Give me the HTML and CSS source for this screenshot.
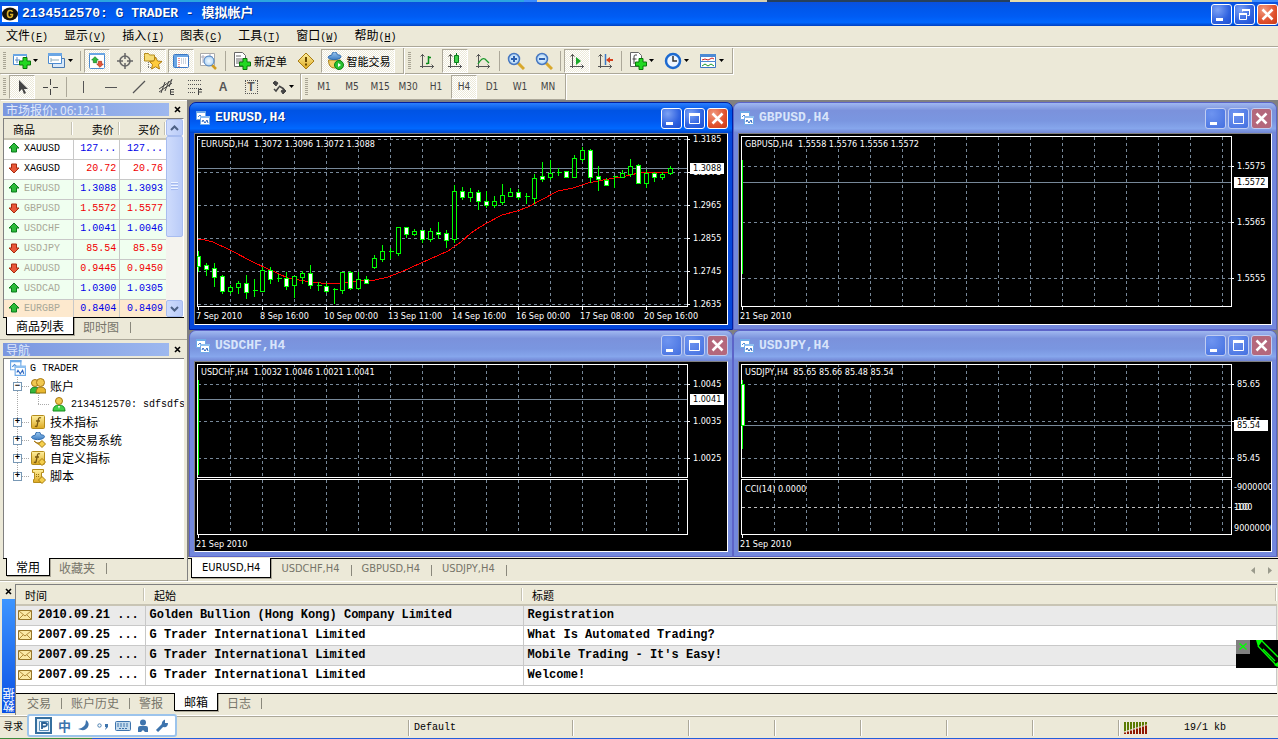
FILE: index.html
```html
<!DOCTYPE html>
<html lang="zh-CN">
<head>
<meta charset="utf-8">
<title>2134512570: G TRADER - 模拟帐户</title>
<link rel="stylesheet" href="styles.css">
</head>
<body>
<svg class="defs" aria-hidden="true">
  <defs>
    <linearGradient id="gold" x1="0" y1="0" x2="0" y2="1"><stop offset="0" stop-color="#fff0a0"/><stop offset="1" stop-color="#dca820"/></linearGradient>
    <linearGradient id="sky" x1="0" y1="0" x2="0" y2="1"><stop offset="0" stop-color="#9cc8f0"/><stop offset="1" stop-color="#3f7fc4"/></linearGradient>
    <radialGradient id="lens"><stop offset="0" stop-color="#f4fbff"/><stop offset="1" stop-color="#a8d0f4"/></radialGradient>
    <symbol id="plus" viewBox="0 0 12 12"><path d="M4 .5h4v3.500h3.500v4H8v3.500H4V8H.5V4H4z" fill="#22d822" stroke="#087808"/></symbol>
    <symbol id="caret" viewBox="0 0 5 3"><path d="M0 0h5L2.500 3z" fill="#000"/></symbol>
    <symbol id="up" viewBox="0 0 12 12"><path d="M6 1l5 5H8.500v4h-5V6H1z" fill="#2dbb3a" stroke="#0b7a1c"/></symbol>
    <symbol id="down" viewBox="0 0 12 12"><path d="M6 11l5-5H8.500V2h-5v4H1z" fill="#e8583a" stroke="#a82c10"/></symbol>
    <symbol id="charts" viewBox="0 0 14 14"><path d="M.5.5h9v8h-9z" fill="#fff" stroke="#6faae8"/><path d="M0 0h10v2H0z" fill="#6faae8"/><path d="M2 6l2-2 2 2" fill="none" stroke="#4c8ad4"/><path d="M4.500 5.500h9v8h-9z" fill="#fff" stroke="#6faae8"/><path d="M4 5h10v2H4z" fill="#8fc0f0"/><path d="M6 11l1-2 2 3 2-3 1 3" fill="none" stroke="#2c66c0"/></symbol>
    <symbol id="hat" viewBox="0 0 16 14"><path d="M1 7q0-2 4-2.500Q5 1 8 1t3 3q4 0 4 2 0 2-4 3-8 1-10-2z" fill="url(#sky)" stroke="#2b68ac"/></symbol>
    <symbol id="rhomb" viewBox="0 0 8 8"><path d="M4 .5L7.500 4 4 7.500.5 4z" fill="#f5cf4c" stroke="#a67c10"/></symbol>
    <symbol id="mail" viewBox="0 0 14 11"><path d="M.5.500h13v9H.5z" fill="#fbe9a6" stroke="#96762a"/><path d="M1 1l6 5 6-5M1 9l4-4M13 9L9 5" fill="none" stroke="#b08a3a"/></symbol>
    <symbol id="axes" viewBox="0 0 16 16"><path d="M3.500 1v14M1 13.500h14M1.500 3.500l2-2 2 2M12.500 11.500l2 2-2 2" fill="none" stroke="#555"/></symbol>
    <symbol id="min" viewBox="0 0 19 19"><path d="M4 13h7v3H4z" fill="#fff"/></symbol>
    <symbol id="max" viewBox="0 0 19 19"><path d="M4.500 4.500h10v10h-10z" fill="none" stroke="#fff"/><path d="M4 4h11v3H4z" fill="#fff"/></symbol>
    <symbol id="rest" viewBox="0 0 19 19"><path d="M7.500 6.500v-2h7v6h-2" fill="none" stroke="#fff"/><path d="M7 4h8v2H7z" fill="#fff"/><path d="M4.500 8.500h7v6h-7z" fill="none" stroke="#fff"/><path d="M4 8h8v2H4z" fill="#fff"/></symbol>
    <symbol id="cross" viewBox="0 0 19 19"><path d="M4.500 4.500l10 10m0-10l-10 10" stroke="#fff" stroke-width="2.500"/></symbol>
    <symbol id="x" viewBox="0 0 7 7"><path d="M1 1l5 5m0-5L1 6" stroke="#000" stroke-width="1.600"/></symbol>
  </defs>
</svg>

<div class="behind"></div>
<header class="title">
  <svg class="logo" viewBox="0 0 16 16"><path d="M0 0h16v16H0z" fill="#fff"/><ellipse cx="8" cy="8" rx="8" ry="6.500" fill="#161208"/><path d="M10.500 6Q10 4.500 8 4.500 5.500 4.500 5.500 8T8 11.500q2.500 0 2.500-3H8" fill="none" stroke="#d9b02c" stroke-width="1.600"/></svg>
  <h1>2134512570: G TRADER - <span>模拟帐户</span></h1>
  <div class="winbtns">
    <button aria-label="最小化"><svg><use href="#min"/></svg></button><button aria-label="还原"><svg><use href="#rest"/></svg></button><button class="close" aria-label="关闭"><svg><use href="#cross"/></svg></button>
  </div>
</header>

<nav class="menu">
  <button>文件<span>(<u>F</u>)</span></button><button>显示<span>(<u>V</u>)</span></button><button>插入<span>(<u>I</u>)</span></button><button>图表<span>(<u>C</u>)</span></button><button>工具<span>(<u>T</u>)</span></button><button>窗口<span>(<u>W</u>)</span></button><button>帮助<span>(<u>H</u>)</span></button>
</nav>

<div class="toolrow">
  <div class="toolbar main">
    <i class="grip"></i>
    <button class="drop" aria-label="新图表"><svg class="ic" viewBox="0 0 18 18"><path d="M.5 2.500h13v10H.5z" fill="#fff" stroke="#4a8ad0"/><path d="M0 2h14v2H0z" fill="#6aa6e4"/><path d="M4 5v6M2 8h5" stroke="#5c8cc4"/><use href="#plus" x="6" y="5" width="12" height="12"/></svg><svg class="caret"><use href="#caret"/></svg></button>
    <button class="drop" aria-label="模板"><svg class="ic" viewBox="0 0 18 18"><path d="M4.500 6.500h12v9h-12z" fill="#d8e8f8" stroke="#4a7ab0"/><path d="M.5 1.500h13v10H.5z" fill="#fff" stroke="#4a8ad0"/><path d="M0 1h14v3H0z" fill="#6aa6e4"/><path d="M3 8h8M3 6v4" stroke="#8ab"/></svg><svg class="caret"><use href="#caret"/></svg></button>
    <i class="sep"></i>
    <button class="on" aria-label="市场报价"><svg class="ic" viewBox="0 0 18 18"><rect x="1.500" y="1.500" width="15" height="15" rx="1" fill="#fff" stroke="#4a8ad0"/><path d="M1 1h16v2H1z" fill="#6aa6e4"/><use href="#up" x="3" y="4" width="8" height="8"/><use href="#down" x="8" y="8" width="8" height="8"/></svg></button>
    <button aria-label="数据窗口"><svg class="ic" viewBox="0 0 18 18"><circle cx="9" cy="9" r="5" fill="none" stroke="#666" stroke-width="1.600"/><path d="M9 1v6M9 11v6M1 9h6M11 9h6" stroke="#666" stroke-width="1.500"/></svg></button>
    <button class="on" aria-label="导航"><svg class="ic" viewBox="0 0 18 18"><path d="M.5 3.500v-2h4l1 1.500h5v6H.5z" fill="#f7dc74" stroke="#b48c1c"/><path d="M4.500 10v6M4 15.500h3" stroke="#777" stroke-dasharray="1 1"/><path d="M11.500 5l2 4 4.500.5-3.500 3 1 4.500-4-2.200-4 2.200 1-4.500-3-3 4.300-.5z" fill="#ffcb3c" stroke="#b07d10"/></svg></button>
    <button class="on" aria-label="终端"><svg class="ic" viewBox="0 0 18 18"><rect x="1.500" y="2.500" width="15" height="13" rx="1" fill="#fff" stroke="#3a78c4"/><path d="M2 3h14v2H2zM2 5h3v10H2z" fill="#6aa6e4"/><path d="M7 6v9" stroke="#d33" stroke-dasharray="1 1"/><path d="M9 7h6M9 9h6M9 11h6" stroke="#9ab" stroke-dasharray="1 1"/></svg></button>
    <button aria-label="策略测试"><svg class="ic" viewBox="0 0 18 18"><path d="M.5 1.500h14v12H.5z" fill="#fff" stroke="#aaa"/><path d="M3 3v8M1 5h12M10 2v3" stroke="#aab"/><path d="M12 13l4 4" stroke="#d09c20" stroke-width="2.500"/><circle cx="9" cy="9" r="5" fill="url(#lens)" fill-opacity=".9" stroke="#4a80c0"/></svg></button>
    <i class="sep"></i>
    <button class="wide" type="button"><svg class="ic" viewBox="0 0 18 18"><path d="M1.500.5h8l3 3v11h-11z" fill="#fff" stroke="#666"/><path d="M3 4h5M3 7h7M3 9h7M3 11h4" stroke="#666"/><use href="#plus" x="6" y="6" width="12" height="12"/></svg>新定单</button>
    <button aria-label="警告"><svg class="ic" viewBox="0 0 18 18"><path d="M9 1l8 8-8 8-8-8z" fill="url(#gold)" stroke="#a87c14"/><path d="M9 5v5M9 11.500v2" stroke="#6b4a00" stroke-width="2"/></svg></button>
    <button class="on wide auto"><svg class="ic" viewBox="0 0 18 18"><path d="M2.500 8h12q0 8-6 8t-6-8z" fill="#f2cf66" stroke="#a8821c"/><use href="#hat" x="0" y="-1" width="17" height="13"/><circle cx="13" cy="13" r="4.500" fill="#28c030" stroke="#0d8014"/><path d="M12 11v4l3-2z" fill="#fff"/></svg>智能交易</button>
  </div>
  <div class="toolbar">
    <i class="grip"></i>
    <button aria-label="柱状图"><svg class="ic s" viewBox="0 0 16 16"><use href="#axes"/><path d="M9.500 3v8M7 10.500h2M10 4.500h2" stroke="#0a8a1a" stroke-width="1.500"/></svg></button>
    <button class="on" aria-label="阴阳烛"><svg class="ic s" viewBox="0 0 16 16"><use href="#axes"/><path d="M9.500 0v12" stroke="#0a7a1a"/><path d="M7.500 2.500h4v7h-4z" fill="#3fd04a" stroke="#0a7a1a"/></svg></button>
    <button aria-label="折线图"><svg class="ic s" viewBox="0 0 16 16"><use href="#axes"/><path d="M3 11q4-7 7-5l4 4" fill="none" stroke="#1a9a2a" stroke-width="1.300"/></svg></button>
    <i class="sep"></i>
    <button aria-label="放大"><svg class="ic" viewBox="0 0 18 18"><path d="M11 11l6 6" stroke="#d8a82c" stroke-width="3"/><circle cx="7" cy="7" r="5.500" fill="url(#lens)" stroke="#4878c0" stroke-width="1.500"/><path d="M4 7h6M7 4v6" stroke="#2c60b0" stroke-width="2"/></svg></button>
    <button aria-label="缩小"><svg class="ic" viewBox="0 0 18 18"><path d="M11 11l6 6" stroke="#d8a82c" stroke-width="3"/><circle cx="7" cy="7" r="5.500" fill="url(#lens)" stroke="#4878c0" stroke-width="1.500"/><path d="M4 7h6" stroke="#2c60b0" stroke-width="2"/></svg></button>
    <i class="sep"></i>
    <button class="on" aria-label="自动滚动"><svg class="ic s" viewBox="0 0 16 16"><use href="#axes"/><path d="M7 4v8l5-4z" fill="#18a828"/></svg></button>
    <button aria-label="图表平移"><svg class="ic s" viewBox="0 0 16 16"><use href="#axes"/><path d="M8.500 1v11" stroke="#3a78c4" stroke-width="1.500"/><path d="M9 7l4-3v2h3v2h-3v2z" fill="#d8401c"/></svg></button>
    <i class="sep"></i>
    <button class="drop" aria-label="指标"><svg class="ic" viewBox="0 0 18 18"><path d="M1.500.5h8l3 3v11h-11z" fill="#fff" stroke="#666"/><path d="M8 3H6q-1 0-1 2v7M3.500 7h4" fill="none" stroke="#444"/><use href="#plus" x="6" y="6" width="12" height="12"/></svg><svg class="caret"><use href="#caret"/></svg></button>
    <button class="drop" aria-label="时间周期"><svg class="ic" viewBox="0 0 18 18"><circle cx="9" cy="9" r="7" fill="#eef6ff" stroke="#1d6ad0" stroke-width="2.500"/><path d="M9 4v5h4" fill="none" stroke="#333" stroke-width="1.500"/></svg><svg class="caret"><use href="#caret"/></svg></button>
    <button class="drop" aria-label="图表模板"><svg class="ic" viewBox="0 0 18 18"><path d="M1.500 2.500h15v13h-15z" fill="#fff" stroke="#3a78c4"/><path d="M1 2h16v3H1zM1 9h16v1H1z" fill="#4c8ad4"/><path d="M3 8l3-1 3 1 4-2 2 1" fill="none" stroke="#c22"/><path d="M3 14l3-2 3 2 3-2 3 2" fill="none" stroke="#1a9a2a"/></svg><svg class="caret"><use href="#caret"/></svg></button>
  </div>
</div>

<div class="toolrow">
  <div class="toolbar draw">
    <i class="grip"></i>
    <button class="on" aria-label="光标"><svg class="ic s" viewBox="0 0 16 16"><path d="M5 1v12l3-3 2 5 2-1-2-4h4z" fill="#444"/></svg></button>
    <button aria-label="十字线"><svg class="ic s" viewBox="0 0 16 16"><path d="M8.500 0v6M8.500 10v6M1 8.500h5M11 8.500h5" stroke="#444"/></svg></button>
    <i class="sep"></i>
    <button aria-label="垂直线"><svg class="ic s" viewBox="0 0 16 16"><path d="M8.500 2v12" stroke="#555"/></svg></button>
    <button aria-label="水平线"><svg class="ic s" viewBox="0 0 16 16"><path d="M2 8.500h12" stroke="#555"/></svg></button>
    <button aria-label="趋势线"><svg class="ic s" viewBox="0 0 16 16"><path d="M2 14L14 2" stroke="#555" stroke-width="1.300"/></svg></button>
    <button aria-label="等距通道"><svg class="ic s" viewBox="0 0 16 16"><path d="M0 10L13 1M0 13L13 4M2 14L6 3M6 12l4-10M10 8l3-8" stroke="#444"/><path d="M15 10.500h-3.500v5H15M12 13h3" fill="none" stroke="#444"/></svg></button>
    <button aria-label="斐波那契"><svg class="ic s" viewBox="0 0 16 16"><path d="M1 1.500h14M1 5.500h14M1 9.500h14M1 13.500h8" stroke="#555" stroke-dasharray="1 1"/><path d="M11.500 16v-5.500H15M12 13h3" fill="none" stroke="#444"/></svg></button>
    <button class="glyph">A</button>
    <button class="glyph"><span class="boxed">T</span></button>
    <button class="drop" aria-label="箭头"><svg class="ic s" viewBox="0 0 16 16"><path d="M2 4l2-2 3 2-2 3zM10 12l3-2 2 2-3 3z" fill="#444" stroke="#444"/><path d="M3 10l2 2 3-4M8 7l5 3" fill="none" stroke="#444" stroke-width="1.500"/></svg><svg class="caret"><use href="#caret"/></svg></button>
  </div>
  <div class="toolbar periods">
    <i class="grip"></i>
    <button>M1</button><button>M5</button><button>M15</button><button>M30</button><button>H1</button><button class="on">H4</button><button>D1</button><button>W1</button><button>MN</button>
  </div>
</div>

<main class="work">
  <aside class="side">
    <section class="panel quotes">
      <div class="cap"><h2>市场报价: 06:12:11</h2><button aria-label="关闭"><svg><use href="#x"/></svg></button></div>
      <div class="sheet">
        <table>
          <thead><tr><th class="l">商品</th><th>卖价</th><th>买价</th></tr></thead>
          <tbody>
            <tr class="hot"><td><svg><use href="#up"/></svg>XAUUSD</td><td class="b">127...</td><td class="b">127...</td></tr>
            <tr class="hot"><td><svg><use href="#down"/></svg>XAGUSD</td><td class="r">20.72</td><td class="r">20.76</td></tr>
            <tr><td><svg><use href="#up"/></svg>EURUSD</td><td class="b">1.3088</td><td class="b">1.3093</td></tr>
            <tr><td><svg><use href="#down"/></svg>GBPUSD</td><td class="r">1.5572</td><td class="r">1.5577</td></tr>
            <tr><td><svg><use href="#up"/></svg>USDCHF</td><td class="b">1.0041</td><td class="b">1.0046</td></tr>
            <tr><td><svg><use href="#down"/></svg>USDJPY</td><td class="r">85.54</td><td class="r">85.59</td></tr>
            <tr><td><svg><use href="#down"/></svg>AUDUSD</td><td class="r">0.9445</td><td class="r">0.9450</td></tr>
            <tr><td><svg><use href="#up"/></svg>USDCAD</td><td class="b">1.0300</td><td class="b">1.0305</td></tr>
            <tr class="sel"><td><svg><use href="#up"/></svg>EURGBP</td><td class="b">0.8404</td><td class="b">0.8409</td></tr>
          </tbody>
        </table>
        <div class="scroll">
          <button aria-label="向上"><svg viewBox="0 0 9 6"><path d="M1 5l3.500-3.500L8 5" fill="none" stroke="#4d6185" stroke-width="2"/></svg></button>
          <div class="thumb"></div>
          <button aria-label="向下"><svg viewBox="0 0 9 6"><path d="M1 1l3.500 3.500L8 1" fill="none" stroke="#4d6185" stroke-width="2"/></svg></button>
        </div>
      </div>
      <div class="tabs"><button class="on">商品列表</button><button>即时图</button></div>
    </section>
    <section class="panel navi">
      <div class="cap"><h2>导航</h2><button aria-label="关闭"><svg><use href="#x"/></svg></button></div>
      <ul class="tree">
        <li class="root"><svg class="ti"><use href="#charts"/></svg><span class="lat">G TRADER</span></li>
        <li><button class="box">−</button><svg class="ti" viewBox="0 0 16 16"><path d="M0 15q0-6 5-6t5 6z" fill="#35b83c" stroke="#167a1c"/><circle cx="5" cy="5" r="3.500" fill="#f0c850" stroke="#a87814"/><path d="M6 15q0-6 5-6t5 6z" fill="#e8b830" stroke="#96700f"/><circle cx="10.500" cy="4.500" r="4" fill="#f0c850" stroke="#a87814"/></svg>账户</li>
        <li class="leaf"><svg class="ti" viewBox="0 0 16 16"><path d="M2 15q0-6 6-6t6 6z" fill="#3fd046" stroke="#148a1c"/><circle cx="8" cy="5" r="3.500" fill="#f0c850" stroke="#a87814"/><path d="M7 10l1 3 1-3z" fill="#fff"/></svg><span class="lat">2134512570: sdfsdfs</span></li>
        <li><button class="box">+</button><svg class="ti" viewBox="0 0 16 16"><rect x="1.500" y="1.500" width="13" height="13" rx="1" fill="url(#gold)" stroke="#b48c1c"/><path d="M11 4Q9 3 8.500 5L7 12q-.5 1-2 0M6 7h4" fill="none" stroke="#7a5a10" stroke-width="1.300"/></svg>技术指标</li>
        <li><button class="box">+</button><svg class="ti" viewBox="0 0 16 16"><path d="M4 9q4 4 8 0v3H8z" fill="#f0c850" stroke="#a87814"/><use href="#hat" x="0" y="-1" width="16" height="13"/><use href="#rhomb" x="8" y="8" width="8" height="8"/></svg>智能交易系统</li>
        <li><button class="box">+</button><svg class="ti" viewBox="0 0 16 16"><rect x="1.500" y="1.500" width="13" height="13" rx="1" fill="url(#gold)" stroke="#b48c1c"/><path d="M10 4Q8 3 7.500 5L6 12q-.5 1-2 0M5 7h4" fill="none" stroke="#7a5a10" stroke-width="1.300"/><use href="#rhomb" x="8" y="8" width="8" height="8"/></svg>自定义指标</li>
        <li><button class="box">+</button><svg class="ti" viewBox="0 0 16 16"><path d="M2.500 1.500h11v3h-2v7h1v3h-9v-3h1v-7h-2z" fill="url(#gold)" stroke="#b48c1c"/><path d="M6 6.500h4M6 8.500h4" stroke="#96700f" stroke-dasharray="1 1"/><use href="#rhomb" x="8" y="8" width="8" height="8"/></svg>脚本</li>
      </ul>
      <div class="tabs"><button class="on">常用</button><button>收藏夹</button></div>
    </section>
  </aside>

  <div class="desk">
    <div class="mdi">
      <section class="win active"><header><svg class="wi"><use href="#charts"/></svg><h2>EURUSD,H4</h2><div class="winbtns"><button aria-label="最小化"><svg><use href="#min"/></svg></button><button aria-label="最大化"><svg><use href="#max"/></svg></button><button class="close" aria-label="关闭"><svg><use href="#cross"/></svg></button></div></header><div class="chart" data-chart="EURUSD"></div></section>
      <section class="win"><header><svg class="wi"><use href="#charts"/></svg><h2>GBPUSD,H4</h2><div class="winbtns"><button aria-label="最小化"><svg><use href="#min"/></svg></button><button aria-label="最大化"><svg><use href="#max"/></svg></button><button class="close" aria-label="关闭"><svg><use href="#cross"/></svg></button></div></header><div class="chart" data-chart="GBPUSD"></div></section>
      <section class="win"><header><svg class="wi"><use href="#charts"/></svg><h2>USDCHF,H4</h2><div class="winbtns"><button aria-label="最小化"><svg><use href="#min"/></svg></button><button aria-label="最大化"><svg><use href="#max"/></svg></button><button class="close" aria-label="关闭"><svg><use href="#cross"/></svg></button></div></header><div class="chart" data-chart="USDCHF"></div></section>
      <section class="win"><header><svg class="wi"><use href="#charts"/></svg><h2>USDJPY,H4</h2><div class="winbtns"><button aria-label="最小化"><svg><use href="#min"/></svg></button><button aria-label="最大化"><svg><use href="#max"/></svg></button><button class="close" aria-label="关闭"><svg><use href="#cross"/></svg></button></div></header><div class="chart" data-chart="USDJPY"></div></section>
    </div>
    <div class="tabs charttabs"><button class="on">EURUSD,H4</button><button>USDCHF,H4</button><button>GBPUSD,H4</button><button>USDJPY,H4</button>
      <span class="pager"><svg viewBox="0 0 4 7"><path d="M4 0v7L0 3.500z" fill="#9a9a8c"/></svg><svg viewBox="0 0 4 7"><path d="M0 0v7l4-3.500z" fill="#9a9a8c"/></svg></span></div>
  </div>
</main>

<section class="terminal">
  <div class="spine"><button aria-label="关闭"><svg><use href="#x"/></svg></button><div class="spinecap">数据</div></div>
  <div class="mailbox">
    <table>
      <thead><tr><th class="c1">时间</th><th class="c2">起始</th><th>标题</th></tr></thead>
      <tbody>
        <tr><td><svg><use href="#mail"/></svg>2010.09.21 ...</td><td>Golden Bullion (Hong Kong) Company Limited</td><td>Registration</td></tr>
        <tr><td><svg><use href="#mail"/></svg>2007.09.25 ...</td><td>G Trader International Limited</td><td>What Is Automated Trading?</td></tr>
        <tr><td><svg><use href="#mail"/></svg>2007.09.25 ...</td><td>G Trader International Limited</td><td>Mobile Trading - It's Easy!</td></tr>
        <tr><td><svg><use href="#mail"/></svg>2007.09.25 ...</td><td>G Trader International Limited</td><td>Welcome!</td></tr>
      </tbody>
    </table>
    <div class="tabs"><button>交易</button><button>账户历史</button><button class="before">警报</button><button class="on">邮箱</button><button>日志</button></div>
  </div>
</section>

<footer class="status">
  <span class="help">寻求</span><span class="prof">Default</span><span></span><span></span><span></span><span></span><span></span><span></span>
  <span class="net"><svg width="24" height="12" viewBox="0 0 24 12"><path d="M1 0v12M4 0v12M7 0v12M10 0v12M13 0v12M16 0v12M19 0v12M22 0v12" stroke="#5a7a00" stroke-width="2"/><path d="M0 9.500L24 2v10H0z" fill="#ece9d8"/><path d="M1 10.500V12M4 9.500V12M7 8.500V12M10 7.500V12M13 6.500V12M16 5.500V12M19 4.500V12M22 3.500V12" stroke="#901800" stroke-width="2"/></svg>19/1 kb</span>
</footer>
<div class="taskline"></div>

<div class="ime">
  <svg width="17" height="17" viewBox="0 0 17 17"><path d="M1 1h15v15H1z" fill="#e4f0fa" stroke="#356f9f" stroke-width="2"/><path d="M4.500 4.500h9v9h-9z" fill="#fff" stroke="#5b8fb8"/><path d="M7 12V6h3q2 0 2 1.500T10 9.500H7" fill="none" stroke="#2a5f94" stroke-width="1.800"/></svg>
  <b>中</b>
  <svg width="14" height="14" viewBox="0 0 14 14"><path d="M9 1q4 3 2 7-3 5-10 2 8-1 8-9z" fill="#3e74ad"/></svg>
  <svg width="12" height="10" viewBox="0 0 12 10"><circle cx="2.500" cy="4.500" r="1.700" fill="none" stroke="#4c80b0"/><path d="M8 3h3v3L8 9l1-3H8z" fill="#3e74ad"/></svg>
  <svg width="16" height="10" viewBox="0 0 16 10"><rect x=".5" y=".5" width="15" height="9" rx="1" fill="#c6dcee" stroke="#3e74ad"/><path d="M2 3h12M2 5h12M4 7.500h8" stroke="#3e74ad" stroke-dasharray="2 1"/></svg>
  <svg width="12" height="13" viewBox="0 0 12 13"><circle cx="6" cy="3.500" r="3" fill="#3e74ad"/><path d="M1 13V9q0-2 2-2h6q2 0 2 2v4H8l-2-2-2 2z" fill="#3e74ad"/></svg>
  <svg width="14" height="13" viewBox="0 0 14 13"><path d="M2 12l6-6" stroke="#3e74ad" stroke-width="3"/><path d="M7 6q-1-4 3-5.500V4h3q0 5-5 4z" fill="#3e74ad"/></svg>
</div>
<div class="pen"><svg width="42" height="28" viewBox="0 0 42 28"><path d="M0 0h14v14H0z" fill="#808080"/><path d="M3.500 3.500l7 6m0-6l-7 6" stroke="#0f0" stroke-width="1.500"/><path d="M20 0h7l-5 7z" fill="#0f0"/><path d="M26 1l16 16M22 6l19 20M27 9l12 12" stroke="#0f0" stroke-width="1.300" fill="none"/><path d="M38 25l4-3v5z" fill="#0f0"/></svg></div>
<script src="charts.js"></script>
</body>
</html>
```
FILE: styles.css
```css
* { box-sizing: border-box; }
html, body { margin: 0; }
body {
  min-height: 100vh;
  display: flex;
  flex-direction: column;
  position: relative;
  overflow-x: hidden;
  background: #ece9d8;
  color: #000;
  font: 12px/16px "Noto Sans CJK SC", sans-serif;
}
h1, h2, ul { margin: 0; padding: 0; font-size: inherit; }
button { font: inherit; color: inherit; background: none; border: 0; padding: 0; margin: 0; }
svg { display: block; flex: none; }
.defs { position: absolute; width: 0; height: 0; }

.behind { height: 2px; background: linear-gradient(90deg, #2ba6e0 0 41%, #3a8cff 41% 42%, #d8d0b0 42% 60%, #26405c 60% 79%, #e8dca8 79% 98%, #3a8cff 98%); }
.title {
  height: 24px;
  display: flex;
  align-items: center;
  padding: 0 0 0 2px;
  background: linear-gradient(#0a50dc 0, #0058ec 30%, #005cf4 60%, #0068ff 85%, #0040c0 100%);
}
.logo { width: 16px; height: 16px; }
.title h1 {
  flex: 1;
  padding-left: 4px;
  color: #fff;
  font: bold 13px/20px "Liberation Mono", "Noto Sans CJK SC", monospace;
  text-shadow: 1px 1px 0 #00308c;
  white-space: pre;
}
.winbtns { display: flex; gap: 2px; }
.winbtns button {
  width: 21px;
  height: 21px;
  border: 1px solid #fff;
  border-radius: 3px;
  background: radial-gradient(circle at 30% 25%, #7da2f4, #2f62e0 60%, #1c4ed0);
}
.winbtns svg { width: 19px; height: 19px; }
.winbtns .close { background: radial-gradient(circle at 30% 25%, #f09a80, #e0502c 60%, #c83a18); }

.menu {
  height: 22px;
  display: flex;
  align-items: center;
  gap: 16px;
  padding: 0 6px 3px;
  border-bottom: 1px solid #fff;
  box-shadow: inset 0 -1px #aca899;
}
.menu button { font-size: 12px; line-height: 18px; }
.menu span { font: 10px "Liberation Mono", monospace; }

.toolrow { display: flex; height: 26px; }
.toolbar {
  display: flex;
  align-items: center;
  padding: 0 3px 0 2px;
  border-right: 1px solid #aca899;
  border-bottom: 1px solid #aca899;
  box-shadow: 1px 1px #fff;
  margin-right: 1px;
}
.toolbar.main { padding-right: 7px; }
.toolbar.draw { padding-right: 0; }
.grip { width: 3px; height: 18px; margin: 0 2px 0 1px; background: repeating-linear-gradient(#a8a494 0 1px, #ece9d8 1px 2px); }
.sep { width: 1px; height: 20px; margin: 0 2px; background: #aca899; }
.toolbar button {
  width: 26px;
  height: 24px;
  margin: 0 1px;
  display: flex;
  align-items: center;
  justify-content: center;
  border: 1px solid transparent;
}
.toolbar .on { background: repeating-conic-gradient(#fff 0 25%, #ece9d8 0 50%) 0 0 / 2px 2px; border-color: #aca899 #fff #fff #aca899; }
.toolbar .drop { width: 33px; gap: 2px; }
.toolbar .wide { width: 62px; font-size: 11px; gap: 3px; white-space: nowrap; }
.toolbar .auto { width: 74px; }
.ic { width: 18px; height: 18px; }
.ic.s { width: 16px; height: 16px; }
.caret { width: 5px; height: 3px; }
.toolbar .glyph { font: bold 12px "Liberation Sans", sans-serif; color: #555; }
.boxed { width: 13px; line-height: 12px; border: 1px dotted #555; }
.periods button { font: 10px "DejaVu Sans Condensed", sans-serif; color: #444; }

.work { flex: 1; display: flex; min-height: 0; border-bottom: 1px solid #fff; }
.side { width: 188px; flex: none; display: flex; flex-direction: column; border-right: 1px solid #808080; }
.panel { padding: 2px 3px 2px; display: flex; flex-direction: column; border-bottom: 1px solid #aca899; }
.quotes { height: 240px; }
.navi { flex: 1; }
.cap { display: flex; align-items: center; height: 15px; margin-bottom: 1px; }
.cap h2 {
  flex: 1;
  height: 13px;
  padding-left: 3px;
  font-weight: normal;
  line-height: 13px;
  color: #dfe8fb;
  background: linear-gradient(90deg, #7a96df, #9db8ef);
}
.cap button { width: 14px; margin-left: 1px; display: flex; justify-content: center; }
.cap svg, .spine button svg { width: 7px; height: 7px; }
.sheet { flex: 1; min-height: 0; display: flex; overflow: hidden; background: #fff; border-left: 1px solid #808080; border-top: 1px solid #808080; border-right: 1px solid #fff; }
table { border-collapse: collapse; table-layout: fixed; }
.sheet table { flex: 1; align-self: flex-start; }
th { height: 20px; padding: 0 10px 0 0; text-align: right; font-size: 11px; font-weight: normal; line-height: 16px; background: #ece9d8; border-bottom: 2px solid #c8c4b4; background-image: linear-gradient(#c5c2b2, #c5c2b2), linear-gradient(#fff, #fff); background-size: 1px 13px; background-position: right 1px center, right 0 center; background-repeat: no-repeat; }
.sheet th { padding-right: 6px; }
.sheet th.l { text-align: left; padding-left: 9px; width: 69px; }
.sheet td { height: 20px; padding: 0 3px 0 0; text-align: right; font: 10px/14px "Liberation Mono", monospace; background: #f0fff0; border-bottom: 1px solid #c8c8c8; border-right: 1px solid #c8c8c8; overflow: hidden; }
.sheet td:last-child { border-right: 0; }
.sheet td:first-child { text-align: left; padding-left: 4px; color: #a8a898; }
.sheet td svg { width: 12px; height: 12px; display: inline-block; vertical-align: -3px; margin-right: 4px; }
.sheet .hot td { background: #fff; }
.sheet .hot td:first-child { color: #000; }
.sheet .sel td { background: #fde9ce; }
.sheet td.b { color: #0000e8; }
.sheet td.r { color: #f00000; }
.scroll { width: 17px; display: flex; flex-direction: column; background: #f4f3ee; }
.scroll button, .thumb { border: 1px solid #a8bdf0; border-radius: 2px; background: linear-gradient(90deg, #cfdcfc, #b9cbf8); }
.scroll button { height: 17px; display: flex; align-items: center; justify-content: center; }
.scroll button svg { width: 9px; height: 6px; }
.thumb { height: 101px; margin-bottom: auto; background: repeating-linear-gradient(#eef3ff 0 1px, #a4b9ee 1px 2px, #c2d2fb 2px 3px) center / 7px 9px no-repeat, linear-gradient(90deg, #cfdcfc, #b9cbf8); }

.tabs { display: flex; height: 20px; border-top: 1px solid #000; }
.tabs button { height: 17px; line-height: 15px; padding: 0 10px; color: #77756a; position: relative; }
.tabs button:not(.on)::after { content: ""; position: absolute; right: 0; top: 4px; height: 11px; border-right: 1px solid #8a887c; }
.tabs button.before::after { display: none; }
.tabs .on { color: #000; background: #fff; border: 1px solid #000; border-top: 0; margin-top: -1px; height: 18px; box-shadow: 1px 1px #aca899; }
.side .tabs .on { margin-left: 3px; padding: 0 9px; }
.side .tabs button:last-child { padding-right: 12px; padding-left: 9px; }

.tree { flex: 1; list-style: none; background: #fff; border-left: 1px solid #808080; border-top: 1px solid #808080; overflow: hidden; padding: 0 0 0 6px; }
.tree li { display: flex; align-items: center; height: 18px; padding-left: 3px; white-space: nowrap; }
.tree li + li:not(.leaf) { background: repeating-linear-gradient(90deg, #aaa 0 1px, transparent 1px 2px) 12px 9px / 8px 1px no-repeat, repeating-linear-gradient(#aaa 0 1px, transparent 1px 2px) 7px 0 / 1px 100% no-repeat; }
.tree li:last-child:not(.leaf) { background-size: 8px 1px, 1px 9px; }
.tree li.root { padding-left: 0; }
.tree li.leaf { padding-left: 41px; background: repeating-linear-gradient(90deg, #aaa 0 1px, transparent 1px 2px) 28px 9px / 12px 1px no-repeat, repeating-linear-gradient(#aaa 0 1px, transparent 1px 2px) 28px 0 / 1px 9px no-repeat, repeating-linear-gradient(#aaa 0 1px, transparent 1px 2px) 7px 0 / 1px 100% no-repeat; }
.box { width: 9px; height: 9px; border: 1px solid #7898b5; background: #fff; font: bold 9px/7px "Liberation Mono", monospace; flex: none; margin-right: 8px; display: flex; align-items: center; justify-content: center; }
.ti { width: 16px; height: 16px; margin-right: 4px; }
.lat { font: 10px "Liberation Mono", monospace; }

.desk { flex: 1; min-width: 0; display: flex; flex-direction: column; }
.mdi { flex: 1; display: grid; grid-template-columns: 1fr 1fr; grid-template-rows: 1fr 1fr; background: #808080; padding: 2px 1px 0; }
.win { display: flex; flex-direction: column; min-width: 0; padding: 0 4px 4px; border: 1px solid #5c64c8; border-radius: 7px 7px 0 0; background: #7388dc; }
.win header { height: 30px; margin: 0 -4px; padding: 0 4px 0 6px; display: flex; align-items: center; border-radius: 6px 6px 0 0; background: linear-gradient(#a0b8f0 0, #7b92dc 25%, #7a96e0 60%, #86a6ec 85%, #7286d4 100%); }
.wi { width: 14px; height: 14px; }
.win h2 { flex: 1; padding-left: 5px; font: bold 13px/20px "Liberation Mono", monospace; color: #d8e4fa; }
.win .winbtns button { border-color: #c0cdf2; background: radial-gradient(circle at 30% 25%, #6e94f0, #4470e0); }
.win .winbtns .close { background: #b4687c; }
.win.active { border-color: #001ea0; background: #0548dc; }
.win.active header { background: linear-gradient(#2c80ff 0, #0054e4 25%, #0058f0 60%, #0068ff 85%, #0044c8 100%); }
.win.active h2 { color: #fff; text-shadow: 1px 1px 0 #00308c; }
.win.active .winbtns button { border-color: #fff; background: radial-gradient(circle at 30% 25%, #7da2f4, #2f62e0 60%, #1c4ed0); }
.win.active .winbtns .close { background: radial-gradient(circle at 30% 25%, #f09a80, #e0502c 60%, #c83a18); }
.chart { flex: 1; min-height: 0; background: #000; border: 1px solid #fff; border-top-color: #808080; border-left-color: #808080; overflow: hidden; }
.chart svg { width: 100%; height: 100%; shape-rendering: crispEdges; }
.chart text { font: 9px "DejaVu Sans Condensed", sans-serif; fill: #fff; white-space: pre; }
.chart .now { fill: #000; }

.charttabs { height: 23px; padding-left: 3px; margin-top: 1px; font: 11px "DejaVu Sans Condensed", sans-serif; }
.charttabs button { line-height: 20px; height: 20px; }
.charttabs button:not(.on) { padding-right: 12px; }
.charttabs button:not(.on)::after { top: 6px; }
.charttabs .on { height: 20px; }
.pager { margin-left: auto; padding-right: 6px; display: flex; align-items: center; gap: 13px; }
.pager svg { width: 4px; height: 7px; }

.terminal { display: flex; height: 134px; padding: 2px 1px 0; border-bottom: 1px solid #fff; }
.spine { width: 14px; display: flex; flex-direction: column; align-items: center; }
.spine button { height: 15px; }
.spinecap { flex: 1; width: 13px; margin-bottom: 2px; padding-top: 1px; background: linear-gradient(#0a50e4, #3d95ff); color: #fff; writing-mode: vertical-rl; transform: rotate(180deg); line-height: 13px; }
.mailbox { flex: 1; min-width: 0; display: flex; flex-direction: column; background: #fff; border-left: 1px solid #808080; border-top: 1px solid #808080; }
.mailbox table { width: 100%; margin-bottom: auto; }
.mailbox th { text-align: left; padding-left: 9px; }
.mailbox .c1 { width: 129px; }
.mailbox .c2 { width: 378px; }
.mailbox td { height: 20px; padding: 0 4px; border-bottom: 1px solid #c8c8c8; border-right: 1px solid #c8c8c8; font: bold 12px/14px "Liberation Mono", monospace; white-space: nowrap; overflow: hidden; }
.mailbox td svg { width: 14px; height: 11px; display: inline-block; vertical-align: -3px; margin: 0 6px 0 -2px; }
.mailbox tbody tr:nth-child(odd) { background: #eaeaea; }
.mailbox .tabs { height: 22px; background: #ece9d8; }
.mailbox .tabs button:not(.on) { padding: 0 11px 0 9px; }
.mailbox .tabs button:not(.on):first-child { padding-left: 11px; }
.mailbox .tabs .on { padding: 0 9px; }

.status { height: 22px; display: flex; align-items: center; border-top: 1px solid #aca899; font: 10px "Liberation Mono", "Noto Sans CJK SC", monospace; }
.status span { width: 86px; height: 16px; line-height: 16px; padding-left: 5px; border-left: 1px solid #aca899; box-shadow: inset 1px 0 #fff; }
.status .help { flex: 1; border: 0; box-shadow: none; padding-left: 3px; }
.status .prof { width: 164px; }
.status .prof + span { width: 116px; }
.status .net { width: 160px; display: flex; align-items: center; gap: 36px; }
.taskline { height: 1px; background: linear-gradient(90deg, #3c8a3c 0 92px, #245edc 92px); }

.ime { position: absolute; left: 27px; bottom: 2px; height: 23px; display: flex; align-items: center; gap: 6px; padding: 0 6px; background: #fff; border: 2px solid #9cc4ec; border-radius: 3px; }
.ime b { color: #3e74ad; font-size: 13px; }
.pen { position: absolute; right: 0; bottom: 71px; background: #000; }
```
FILE: charts.js
```js
// Candle rows: high, low, body top, body bottom, filled (pixels from the top of the pane).
const CANDLES = [
  [115,135,120,130,1],[127,139,129,133,1],[127,150,132,141,1],[139,157,140,155,1],[149,157,151,155,0],
  [145,157,147,151,0],[139,162,147,156,1],[143,160,154,154,0],[131,155,134,155,0],[131,147,134,143,1],
  [138,145,142,142,0],[136,153,142,150,1],[140,161,140,149,0],[135,147,137,141,0],[129,152,137,149,1],
  [146,154,149,149,0],[147,156,150,155,1],[152,167,153,153,0],[136,157,136,154,0],[135,153,136,152,1],
  [136,153,143,152,0],[140,147,143,147,1],[119,132,122,131,0],[109,125,115,123,0],[112,122,115,115,0],
  [91,119,91,117,0],[91,101,91,98,1],[93,99,95,98,0],[94,106,94,103,1],[92,105,95,103,0],
  [86,102,96,98,1],[94,111,97,104,1],[49,106,55,103,0],[51,63,55,61,1],[52,65,56,61,0],
  [54,73,56,65,1],[55,71,65,69,1],[60,71,65,69,0],[48,68,59,66,0],[52,60,56,60,0],
  [53,63,56,61,1],[57,67,60,60,0],[38,67,42,62,0],[26,45,40,43,1],[24,43,37,41,0],
  [32,39,36,36,0],[35,41,35,41,1],[19,41,22,41,0],[11,25,14,23,0],[13,46,14,41,1],
  [30,54,40,43,1],[42,49,44,49,1],[40,51,40,40,0],[34,41,37,41,0],[23,40,30,38,0],
  [28,47,29,47,1],[34,51,37,47,0],[36,45,37,41,1],[36,43,38,41,0],[30,38,32,37,0]
];
const AVERAGE = "1,103 8,104 16,106 33,114 56,126 71,133 91,142 108,145 124,147 138,148 151,146 178,144 191,141 204,136 224,127 251,115 264,106 274,97 283,91 290,87 305,79 320,75 331,71 346,63 361,55 376,52 391,47 406,44 429,40 446,36 473,36";

const CHARTS = {
  EURUSD: {
    info: "EURUSD,H4  1.3072 1.3096 1.3072 1.3088",
    grid: [[3,"1.3185"],[36,"1.3075"],[69,"1.2965"],[102,"1.2855"],[135,"1.2745"],[168,"1.2635"]],
    bid: [32,"1.3088"], candles: CANDLES, average: AVERAGE,
    dates: ["7 Sep 2010","8 Sep 16:00","10 Sep 00:00","13 Sep 11:00","14 Sep 16:00","16 Sep 00:00","17 Sep 08:00","20 Sep 16:00"]
  },
  GBPUSD: {
    info: "GBPUSD,H4  1.5558 1.5576 1.5556 1.5572",
    grid: [[30,"1.5575"],[86,"1.5565"],[142,"1.5555"]],
    bid: [46,"1.5572"], candles: [[24,137,24,24,0]], dates: ["21 Sep 2010"]
  },
  USDCHF: {
    info: "USDCHF,H4  1.0032 1.0046 1.0021 1.0041", split: true,
    grid: [[20,"1.0045"],[57,"1.0035"],[94,"1.0025"]],
    bid: [35,"1.0041"], candles: [[16,110,16,16,0]], dates: ["21 Sep 2010"]
  },
  USDJPY: {
    info: "USDJPY,H4  85.65 85.66 85.48 85.54", split: true,
    grid: [[20,"85.65"],[57,"85.55"],[94,"85.45"]],
    bid: [61,"85.54"], candles: [[16,84,20,61,1]], dates: ["21 Sep 2010"],
    lower: { info: "CCI(14) 0.0000", line: 28, labels: [[8,"-90000000"],[28,"-100"],[28,"100"],[49,"900000000"]] }
  }
};

const GRID = "#778899";
const line = (x1, y1, x2, y2, color, dash) =>
  `<path d="M${x1 + .5} ${y1 + .5}L${x2 + .5} ${y2 + .5}" stroke="${color}"${dash ? ' stroke-dasharray="3 3"' : ""}/>`;
// Candle wicks cover both end pixels.
const wick = (x, y1, y2) => `<rect x="${x}" y="${y1}" width="1" height="${y2 - y1 + 1}" fill="#0f0"/>`;
const frame = (x, y, w, h) => `<rect x="${x + .5}" y="${y + .5}" width="${w}" height="${h}" fill="none" stroke="#fff"/>`;
const text = (x, y, value, cls = "") => `<text x="${x}" y="${y}" class="${cls}">${value}</text>`;

function draw(host) {
  const c = CHARTS[host.dataset.chart];
  const left = 2, top = 2, right = host.clientWidth - 40, bottom = host.clientHeight - 18;
  const mainEnd = c.split ? bottom - 57 : bottom;
  let out = "";
  for (let x = left + 33; x < right; x += 32) {
    out += line(x, top, x, mainEnd, GRID, true);
    if (c.split) out += line(x, mainEnd + 2, x, bottom, GRID, true);
  }
  for (const [y, label] of c.grid) {
    out += line(left, top + y, right, top + y, GRID, true) + line(right, top + y, right + 2, top + y, "#fff");
    out += text(right + 6, top + y + 3, label);
  }
  out += line(left, top + c.bid[0], right, top + c.bid[0], GRID);
  if (c.average) out += `<polyline points="${c.average}" transform="translate(${left} ${top})" fill="none" stroke="#f00"/>`;
  out += frame(left, top, right - left, mainEnd - top);
  if (c.split) out += frame(left, mainEnd + 2, right - left, bottom - mainEnd - 2);
  c.candles.forEach(([high, low, a, b, filled], i) => {
    const x = left + 1 + i * 8;
    out += wick(x, top + high, top + low);
    if (a === b) { if (c.candles.length > 1) out += line(x - 2, top + a, x + 3, top + a, "#0f0"); }
    else {
      const from = Math.max(x - 2, left);
      out += `<rect x="${from + .5}" y="${top + a + .5}" width="${x + 2 - from}" height="${b - a}" fill="${filled ? "#fff" : "#000"}" stroke="#0f0"/>`;
    }
  });
  const wide = c.info.length * 5 - 14;
  out += `<rect x="5" y="5" width="${wide}" height="10" fill="#000"/>` + text(6, 13, c.info);
  if (c.lower) {
    const y = mainEnd + 2;
    out += line(left, y + c.lower.line, right, y + c.lower.line, "#c0c0c0", true) + text(6, y + 13, c.lower.info);
    for (const [dy, label] of c.lower.labels) out += text(right + 3, y + dy + 3, label);
  }
  out += `<rect x="${right + 3}" y="${top + c.bid[0] - 5}" width="34" height="11" fill="#fff"/>` + text(right + 6, top + c.bid[0] + 3, c.bid[1], "now");
  c.dates.forEach((d, i) => {
    out += line(left + 1 + i * 64, bottom, left + 1 + i * 64, bottom + 3, "#fff") + text(1 + i * 64, bottom + 13, d);
  });
  host.innerHTML = `<svg role="img" aria-label="${c.info}">${out}</svg>`;
}

const drawAll = () => document.querySelectorAll(".chart").forEach(draw);
drawAll();
window.addEventListener("resize", drawAll);
```
